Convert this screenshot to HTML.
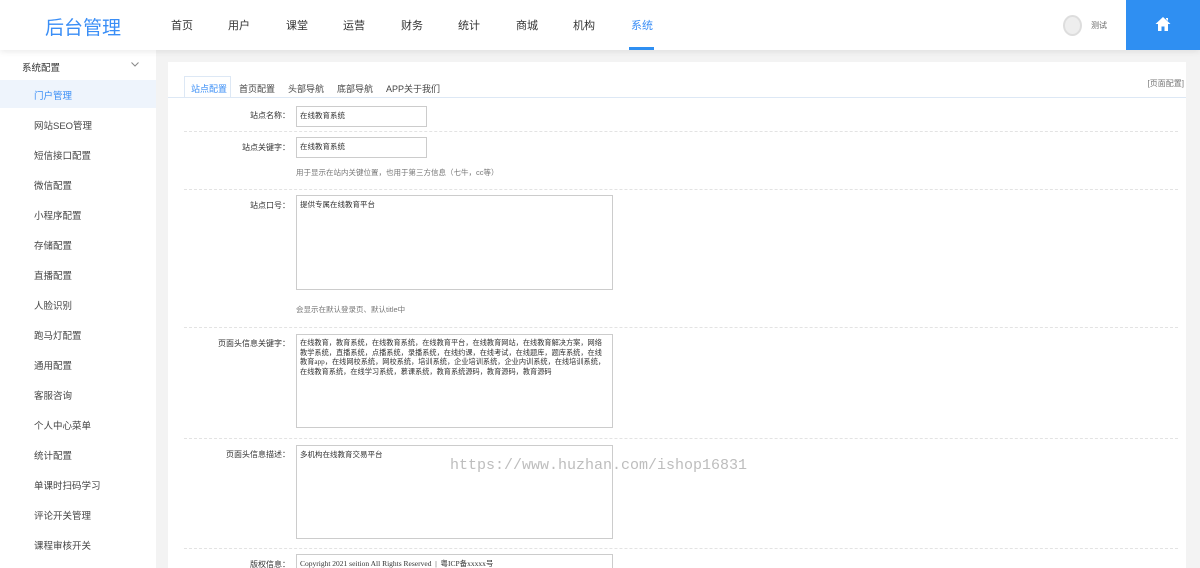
<!DOCTYPE html>
<html><head><meta charset="utf-8"><style>
*{margin:0;padding:0;box-sizing:border-box}
html,body{width:1200px;height:568px;overflow:hidden}
body{background:#f3f3f3;font-family:"Liberation Sans","Noto Sans CJK SC",sans-serif;position:relative}
.hd{position:absolute;left:0;top:0;width:1200px;height:50px;background:#fff;box-shadow:0 2px 6px rgba(0,0,0,.08);z-index:2}
.logo{position:absolute;left:45px;top:13px;font-size:19px;color:#3a8ef6}
.nav a{position:absolute;top:17px;font-size:11px;color:#333}
.home{position:absolute;right:0;top:0;width:74px;height:50px;background:#2f8ff2}
.side{position:absolute;left:0;top:50px;width:156px;height:518px;background:#fff}
.side div{position:absolute;left:34px;font-size:9.5px;color:#444}
.panel{position:absolute;left:168px;top:62px;width:1018px;height:506px;background:#fff;overflow:hidden}
.tabs span{position:absolute;top:20px;font-size:9px;color:#444}
.row{position:absolute;left:16px;width:994px;border-top:1px dashed #e3e3e3}
.lb{position:absolute;font-size:8px;color:#333;text-align:right;width:106px;left:0}
.in{position:absolute;left:112px;border:1px solid #ccc;font-size:7.5px;color:#333;padding:4px 3px;line-height:9.5px;font-family:"Liberation Serif","Noto Sans CJK SC",serif}
.tip{position:absolute;left:112px;font-size:7.5px;color:#777}
</style></head><body>
<div class="hd">
<div class="logo">后台管理</div>
<div class="nav"><a style="left:171px">首页</a><a style="left:228px">用户</a><a style="left:286px">课堂</a><a style="left:343px">运营</a><a style="left:401px">财务</a><a style="left:458px">统计</a><a style="left:516px">商城</a><a style="left:573px">机构</a><a style="left:631px;color:#3a8ef6">系统</a></div>
<div style="position:absolute;left:629px;top:47px;width:25px;height:3px;background:#2f8ff2"></div>
<div style="position:absolute;left:1063px;top:15px;width:19px;height:21px;border-radius:50%;background:#eee;border:2px solid #ddd"></div>
<div style="position:absolute;left:1091px;top:20px;font-size:8px;color:#666">测试</div>
<div class="home"><svg style="position:absolute;left:29px;top:16px" width="16" height="16" viewBox="0 0 16 16"><path d="M8 1L0.5 8h2.5v7h3.5v-4.5h3V15H13V8h2.5z M11 2h2v3l-2-2z" fill="#fff"/></svg></div>
</div>
<div class="side">
<div style="left:22px;top:10px;color:#333">系统配置</div>
<svg style="position:absolute;left:131px;top:12px" width="8" height="5"><path d="M0.5 0.5L4 4 7.5 0.5" stroke="#888" fill="none"/></svg>
<div style="left:0;top:30px;width:156px;height:28px;background:#eef4fc"></div>
<div style="top:38px;color:#3a8ef6">门户管理</div>
<div style="top:68px">网站SEO管理</div>
<div style="top:98px">短信接口配置</div>
<div style="top:128px">微信配置</div>
<div style="top:158px">小程序配置</div>
<div style="top:188px">存储配置</div>
<div style="top:218px">直播配置</div>
<div style="top:248px">人脸识别</div>
<div style="top:278px">跑马灯配置</div>
<div style="top:308px">通用配置</div>
<div style="top:338px">客服咨询</div>
<div style="top:368px">个人中心菜单</div>
<div style="top:398px">统计配置</div>
<div style="top:428px">单课时扫码学习</div>
<div style="top:458px">评论开关管理</div>
<div style="top:488px">课程审核开关</div>
</div>
<div class="panel">
<div style="position:absolute;left:16px;top:14px;width:47px;height:22px;border:1px solid #dde8f5;border-bottom:none;background:#fff"></div>
<div style="position:absolute;left:0;top:35px;width:1018px;border-top:1px solid #dde8f5"></div>
<div class="tabs"><span style="left:23px;color:#3a8ef6">站点配置</span><span style="left:71px">首页配置</span><span style="left:120px">头部导航</span><span style="left:169px">底部导航</span><span style="left:218px">APP关于我们</span></div>
<div style="position:absolute;right:2px;top:16px;font-size:8px;color:#777">[页面配置]</div>
<div class="row" style="top:37px;border:none"><div class="lb" style="top:11px">站点名称：</div><div class="in" style="top:7px;width:131px;height:21px">在线教育系统</div></div>
<div class="row" style="top:69px"><div class="lb" style="top:10px">站点关键字：</div><div class="in" style="top:5px;width:131px;height:21px">在线教育系统</div><div class="tip" style="top:35px">用于显示在站内关键位置，也用于第三方信息（七牛，cc等）</div></div>
<div class="row" style="top:127px"><div class="lb" style="top:10px">站点口号：</div><div class="in" style="top:5px;width:317px;height:95px">提供专属在线教育平台</div><div class="tip" style="top:114px">会显示在默认登录页、默认title中</div></div>
<div class="row" style="top:265px"><div class="lb" style="top:10px">页面头信息关键字：</div><div class="in" style="top:6px;width:317px;height:94px;line-height:9.5px;font-size:7.2px">在线教育，教育系统，在线教育系统，在线教育平台，在线教育网站，在线教育解决方案，网络教学系统，直播系统，点播系统，录播系统，在线约课，在线考试，在线题库，题库系统，在线教育app，在线网校系统，网校系统，培训系统，企业培训系统，企业内训系统，在线培训系统，在线教育系统，在线学习系统，慕课系统，教育系统源码，教育源码，教育源码</div></div>
<div class="row" style="top:376px"><div class="lb" style="top:10px">页面头信息描述：</div><div class="in" style="top:6px;width:317px;height:94px">多机构在线教育交易平台</div></div>
<div class="row" style="top:486px"><div class="lb" style="top:10px">版权信息：</div><div class="in" style="top:5px;width:317px;height:20px">Copyright 2021 seition All Rights Reserved &nbsp;| &nbsp;粤ICP备xxxxx号</div></div>
</div>
<div style="position:absolute;left:450px;top:457px;font-family:'Liberation Mono',monospace;font-size:15px;color:#bdbdbd">https://www.huzhan.com/ishop16831</div>
</body></html>
